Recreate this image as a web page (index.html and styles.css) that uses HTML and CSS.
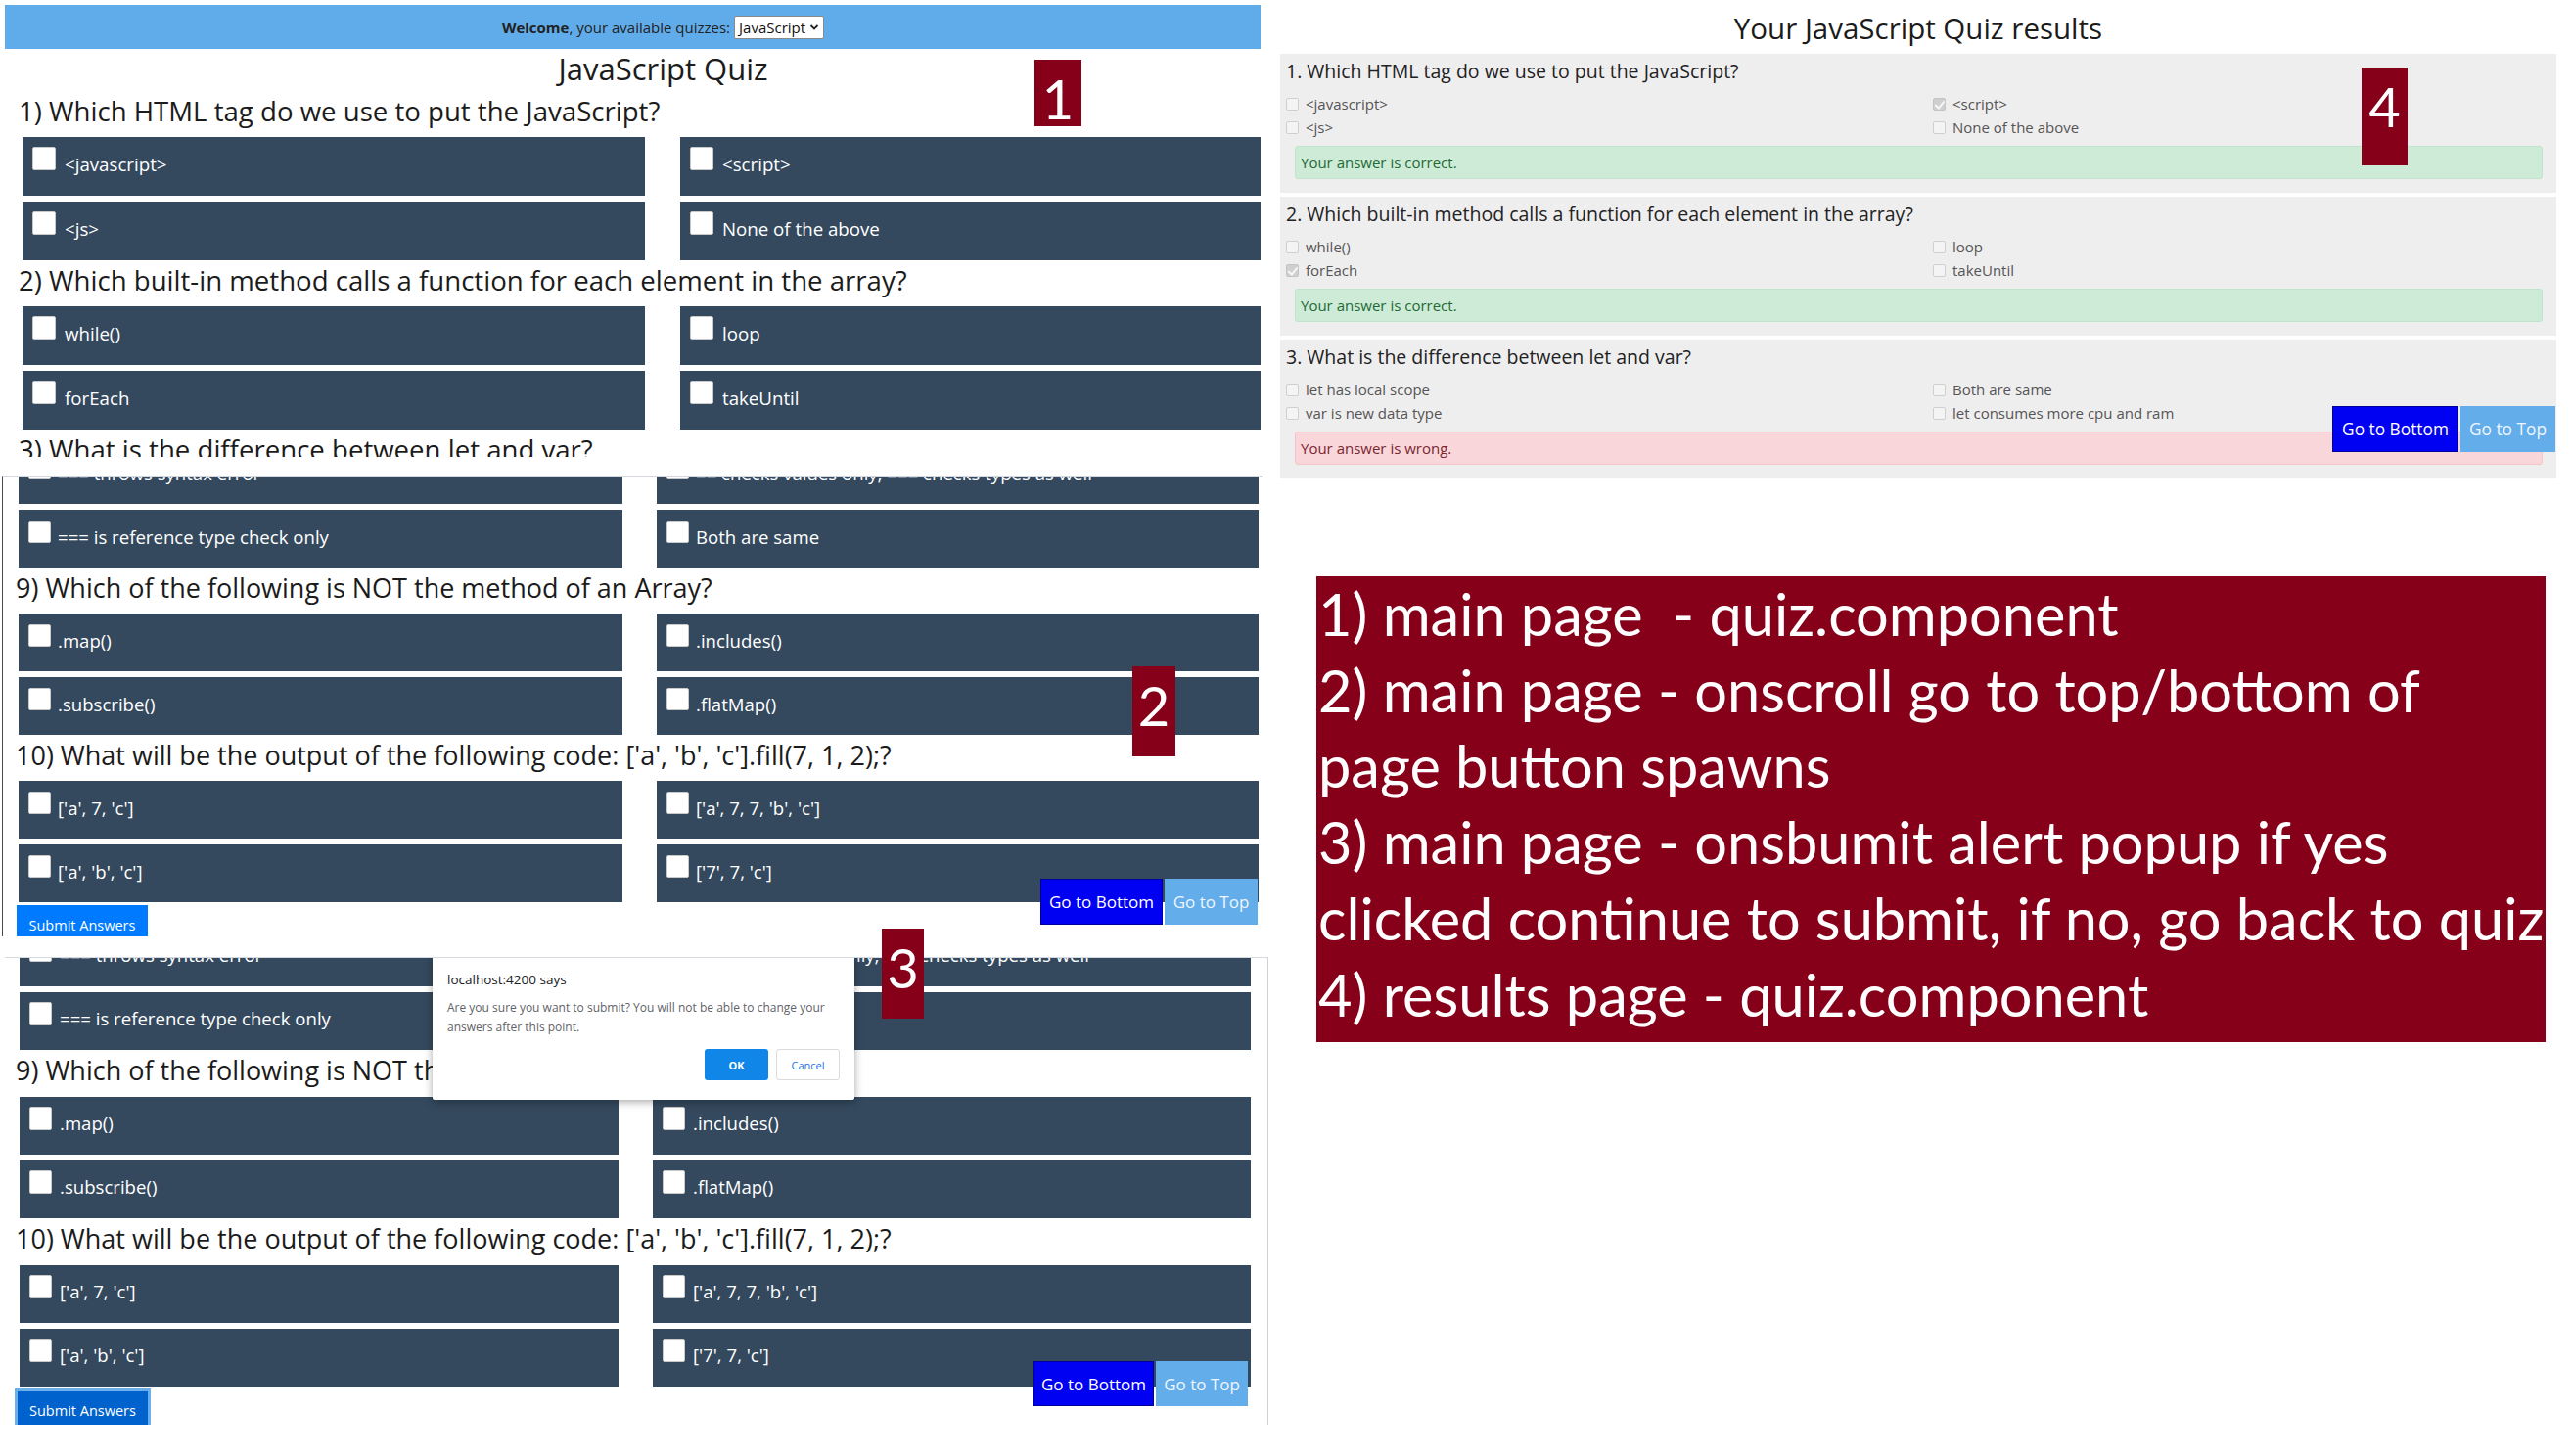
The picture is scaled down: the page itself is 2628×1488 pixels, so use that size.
FILE: index.html
```html
<!DOCTYPE html>
<html lang="en">
<head>
<meta charset="utf-8">
<title>JavaScript Quiz – overview</title>
<link rel="stylesheet" href="styles.css">
</head>
<body>
<div class="canvas">
  <div class="col-left">

    <section class="shot shot1">
      <div class="topbar">
        <span class="welcome"><b>Welcome</b>, your available quizzes:</span>
        <span class="select">JavaScript<svg width="10" height="8" viewBox="0 0 10 8"><path d="M1.5 2 L5 5.5 L8.5 2" fill="none" stroke="#222" stroke-width="1.8"/></svg></span>
      </div>
      <h1 class="quiz-title">JavaScript Quiz</h1>
      <h2 class="q">1) Which HTML tag do we use to put the JavaScript?</h2>
      <div class="opts">
        <div class="opt"><span class="cb"></span><span class="lbl">&lt;javascript&gt;</span></div>
        <div class="opt"><span class="cb"></span><span class="lbl">&lt;script&gt;</span></div>
        <div class="opt"><span class="cb"></span><span class="lbl">&lt;js&gt;</span></div>
        <div class="opt"><span class="cb"></span><span class="lbl">None of the above</span></div>
      </div>
      <h2 class="q">2) Which built-in method calls a function for each element in the array?</h2>
      <div class="opts">
        <div class="opt"><span class="cb"></span><span class="lbl">while()</span></div>
        <div class="opt"><span class="cb"></span><span class="lbl">loop</span></div>
        <div class="opt"><span class="cb"></span><span class="lbl">forEach</span></div>
        <div class="opt"><span class="cb"></span><span class="lbl">takeUntil</span></div>
      </div>
      <h2 class="q">3) What is the difference between let and var?</h2>
    </section>

    <section class="shot shot2">
      <div class="opts first">
        <div class="opt"><span class="cb"></span><span class="lbl">=== throws syntax error</span></div>
        <div class="opt"><span class="cb"></span><span class="lbl">== checks values only; === checks types as well</span></div>
        <div class="opt"><span class="cb"></span><span class="lbl">=== is reference type check only</span></div>
        <div class="opt"><span class="cb"></span><span class="lbl">Both are same</span></div>
      </div>
      <h2 class="q">9) Which of the following is NOT the method of an Array?</h2>
      <div class="opts">
        <div class="opt"><span class="cb"></span><span class="lbl">.map()</span></div>
        <div class="opt"><span class="cb"></span><span class="lbl">.includes()</span></div>
        <div class="opt"><span class="cb"></span><span class="lbl">.subscribe()</span></div>
        <div class="opt"><span class="cb"></span><span class="lbl">.flatMap()</span></div>
      </div>
      <h2 class="q">10) What will be the output of the following code: ['a', 'b', 'c'].fill(7, 1, 2);?</h2>
      <div class="opts">
        <div class="opt"><span class="cb"></span><span class="lbl">['a', 7, 'c']</span></div>
        <div class="opt"><span class="cb"></span><span class="lbl">['a', 7, 7, 'b', 'c']</span></div>
        <div class="opt"><span class="cb"></span><span class="lbl">['a', 'b', 'c']</span></div>
        <div class="opt"><span class="cb"></span><span class="lbl">['7', 7, 'c']</span></div>
      </div>
      <button class="submit">Submit Answers</button>
      <div class="goto goto2"><button class="go-bottom">Go to Bottom</button><button class="go-top">Go to Top</button></div>
    </section>

    <section class="shot shot3">
      <div class="opts first">
        <div class="opt"><span class="cb"></span><span class="lbl">=== throws syntax error</span></div>
        <div class="opt"><span class="cb"></span><span class="lbl">== checks values only; === checks types as well</span></div>
        <div class="opt"><span class="cb"></span><span class="lbl">=== is reference type check only</span></div>
        <div class="opt"><span class="cb"></span><span class="lbl">Both are same</span></div>
      </div>
      <h2 class="q">9) Which of the following is NOT the method of an Array?</h2>
      <div class="opts">
        <div class="opt"><span class="cb"></span><span class="lbl">.map()</span></div>
        <div class="opt"><span class="cb"></span><span class="lbl">.includes()</span></div>
        <div class="opt"><span class="cb"></span><span class="lbl">.subscribe()</span></div>
        <div class="opt"><span class="cb"></span><span class="lbl">.flatMap()</span></div>
      </div>
      <h2 class="q">10) What will be the output of the following code: ['a', 'b', 'c'].fill(7, 1, 2);?</h2>
      <div class="opts">
        <div class="opt"><span class="cb"></span><span class="lbl">['a', 7, 'c']</span></div>
        <div class="opt"><span class="cb"></span><span class="lbl">['a', 7, 7, 'b', 'c']</span></div>
        <div class="opt"><span class="cb"></span><span class="lbl">['a', 'b', 'c']</span></div>
        <div class="opt"><span class="cb"></span><span class="lbl">['7', 7, 'c']</span></div>
      </div>
      <button class="submit focused">Submit Answers</button>
      <div class="goto goto3"><button class="go-bottom">Go to Bottom</button><button class="go-top">Go to Top</button></div>
      <div class="dialog">
        <div class="dlg-title">localhost:4200 says</div>
        <div class="dlg-msg">Are you sure you want to submit? You will not be able to change your answers after this point.</div>
        <div class="dlg-btns"><button class="dlg-ok">OK</button><button class="dlg-cancel">Cancel</button></div>
      </div>
    </section>
  </div>

  <div class="col-right">
    <section class="results">
      <h1 class="res-title">Your JavaScript Quiz results</h1>
      <div class="card">
        <h3 class="res-q">1. Which HTML tag do we use to put the JavaScript?</h3>
        <div class="res-opts">
          <div class="ro"><span class="rcb"></span>&lt;javascript&gt;</div>
          <div class="ro"><span class="rcb checked"></span>&lt;script&gt;</div>
          <div class="ro"><span class="rcb"></span>&lt;js&gt;</div>
          <div class="ro"><span class="rcb"></span>None of the above</div>
        </div>
        <div class="alert ok">Your answer is correct.</div>
      </div>
      <div class="card">
        <h3 class="res-q">2. Which built-in method calls a function for each element in the array?</h3>
        <div class="res-opts">
          <div class="ro"><span class="rcb"></span>while()</div>
          <div class="ro"><span class="rcb"></span>loop</div>
          <div class="ro"><span class="rcb checked"></span>forEach</div>
          <div class="ro"><span class="rcb"></span>takeUntil</div>
        </div>
        <div class="alert ok">Your answer is correct.</div>
      </div>
      <div class="card">
        <h3 class="res-q">3. What is the difference between let and var?</h3>
        <div class="res-opts">
          <div class="ro"><span class="rcb"></span>let has local scope</div>
          <div class="ro"><span class="rcb"></span>Both are same</div>
          <div class="ro"><span class="rcb"></span>var is new data type</div>
          <div class="ro"><span class="rcb"></span>let consumes more cpu and ram</div>
        </div>
        <div class="alert bad">Your answer is wrong.</div>
      </div>
      <div class="goto goto4"><button class="go-bottom">Go to Bottom</button><button class="go-top">Go to Top</button></div>
    </section>

    <div class="note">
      <div class="nl">1) main page  - quiz.component</div>
      <div class="nl">2) main page - onscroll go to top/bottom of</div>
      <div class="nl">page button spawns</div>
      <div class="nl">3) main page - onsbumit alert popup if yes</div>
      <div class="nl">clicked continue to submit, if no, go back to quiz</div>
      <div class="nl">4) results page - quiz.component</div>
    </div>
  </div>

  <div class="badge b1">1</div>
  <div class="badge b2">2</div>
  <div class="badge b3">3</div>
  <div class="badge b4">4</div>
</div>
</body>
</html>
```

FILE: styles.css
```css
* { box-sizing: border-box; }
html, body { margin: 0; padding: 0; background: #ffffff; }
body { font-family: "Open Sans", "Noto Sans", sans-serif; color: #212529; }

.canvas {
  position: relative;
  width: 2628px;
  height: 1488px;
  display: grid;
  grid-template-columns: 1300px 1328px;
  overflow: hidden;
}
.col-left, .col-right { display: flex; flex-direction: column; align-items: flex-start; }

/* ---------- quiz screenshots ---------- */
.shot { position: relative; overflow: hidden; background: #fff; }
.shot1 { margin: 5px 0 0 5px; width: 1283px; height: 462px; }
.shot2 { margin: 19px 0 0 2px; width: 1288px; height: 471px; border-left: 1px solid #4a4a4a; border-top: 1px solid #d5d9df; }
.shot3 { margin: 21px 0 0 5px; width: 1291px; height: 478px; border-top: 1px solid #d5d9df; border-right: 1px solid #cfd3d8; }

.topbar {
  height: 45px;
  background: #60acea;
  display: flex;
  align-items: center;
  justify-content: center;
  padding-left: 62px;
  gap: 4px;
  font-size: 15px;
  color: #222;
}
.welcome b { font-weight: 700; }
.select {
  display: inline-flex;
  align-items: center;
  gap: 4px;
  height: 24px;
  padding: 0 4px 0 4px;
  background: #fff;
  border: 1px solid #8a8a8a;
  border-radius: 2px;
  font-size: 15px;
  color: #111;
}

.quiz-title {
  margin: 0 0 3px;
  padding-left: 62px;
  text-align: center;
  font-size: 31px;
  font-weight: 400;
  line-height: 40px;
  color: #1b1b1b;
}

.q {
  margin: 0 0 6px;
  padding-left: 14px;
  font-size: 27.6px;
  font-weight: 400;
  line-height: 41px;
  color: #1b1b1b;
  white-space: nowrap;
}

.opts { display: grid; row-gap: 6px; }
.opt {
  background: #34495e;
  display: flex;
  align-items: flex-start;
  color: #fff;
  white-space: nowrap;
}
.cb {
  flex: none;
  background: #fff;
  border: 1px solid #c9c9c9;
  border-radius: 2px;
}

.shot1 .opts { margin-left: 18px; grid-template-columns: 636px 1fr; column-gap: 36px; }
.shot1 .opt { height: 60px; padding: 10px 0 0 10px; }
.shot1 .cb { width: 24px; height: 24px; margin-right: 9px; }
.shot1 .lbl { font-size: 18.7px; line-height: 35px; }

.shot2 .q { padding-left: 13px; font-size: 27px; }
.shot2 .opts { margin-left: 16px; grid-template-columns: 617px 615px; column-gap: 35px; }
.shot2 .opts.first { margin-top: -31px; }
.shot2 .opt { height: 59px; padding: 11px 0 0 10px; }
.shot2 .cb { width: 23px; height: 23px; margin-right: 7px; }
.shot2 .lbl { font-size: 18.6px; line-height: 33px; }

.shot3 .q { padding-left: 11px; font-size: 27px; margin-bottom: 7px; }
.shot3 .opts { margin-left: 15px; grid-template-columns: 612px 611px; column-gap: 35px; }
.shot3 .opts.first { margin-top: -30px; }
.shot3 .opt { height: 59px; padding: 10px 0 0 10px; }
.shot3 .cb { width: 23px; height: 24px; margin-right: 8px; }
.shot3 .lbl { font-size: 18.6px; line-height: 33px; }

.submit {
  display: block;
  border: none;
  border-radius: 0;
  background: #007bff;
  color: #fff;
  font-family: "Open Sans", sans-serif;
  font-size: 14.5px;
  padding: 0;
  cursor: pointer;
}
.shot2 .submit { margin: 3px 0 0 14px; width: 134px; height: 33px; line-height: 33px; padding-top: 4px; }
.shot3 .submit.focused {
  margin: 2px 0 0 10px;
  width: 139px;
  height: 39px;
  background: #0062cc;
  border: 3px solid #6aaeea;
  border-bottom: none;
  padding-top: 2px;
}

.goto { position: absolute; display: flex; gap: 2px; }
.goto button {
  height: 47px;
  border: none;
  border-radius: 0;
  color: #fff;
  font-family: "Open Sans", sans-serif;
  font-size: 17px;
  padding: 0;
  cursor: pointer;
}
.go-bottom { background: #0000f2; border: 1px solid #00009a !important; }
.go-top { background: #64adeb; color: #eef6fd !important; }
.goto2 { left: 1060px; top: 411px; }
.goto2 .go-bottom { width: 125px; }
.goto2 .go-top { width: 95px; }
.goto3 { left: 1051px; top: 412px; height: 46px; }
.goto3 .go-bottom { width: 123px; height: 46px; }
.goto3 .go-top { width: 94px; height: 46px; }

.dialog {
  position: absolute;
  left: 437px;
  top: -3px;
  width: 431px;
  height: 148px;
  background: #fff;
  border-radius: 2px;
  box-shadow: 0 2px 9px rgba(0,0,0,0.35);
  padding: 16px 15px 0 15px;
}
.dlg-title { font-size: 13.5px; color: #202124; line-height: 18px; }
.dlg-msg { margin-top: 10px; font-size: 12px; line-height: 20px; color: #5f6368; width: 390px; }
.dlg-btns { display: flex; justify-content: flex-end; gap: 8px; margin-top: 12px; }
.dlg-ok {
  width: 65px; height: 32px;
  background: #0f86e8; color: #fff; border: none; border-radius: 3px;
  font-family: "Open Sans", sans-serif; font-size: 11px; font-weight: 700;
}
.dlg-cancel {
  width: 65px; height: 32px;
  background: #fff; color: #1a73e8; border: 1px solid #dadce0; border-radius: 3px;
  font-family: "Open Sans", sans-serif; font-size: 11px;
}

/* ---------- results ---------- */
.results { position: relative; margin-left: 8px; width: 1304px; height: 486px; }
.res-title {
  margin: 0;
  height: 55px;
  padding-top: 3px;
  text-align: center;
  font-size: 29.5px;
  font-weight: 400;
  line-height: 51px;
  color: #1b1b1b;
}
.card {
  background: #efeeef;
  margin-bottom: 4px;
  padding: 6px 14px 14px 6px;
}
.res-q { margin: 0 0 9px; font-size: 19.5px; font-weight: 400; line-height: 24px; color: #222; white-space: nowrap; }
.res-opts { display: grid; grid-template-columns: 661px 1fr; }
.ro { display: flex; align-items: center; height: 24px; font-size: 15px; color: #555; white-space: nowrap; }
.rcb {
  position: relative;
  width: 13px; height: 13px;
  margin-right: 7px;
  background: #f4f4f4;
  border: 1px solid #cfcfcf;
  border-radius: 2px;
  flex: none;
}
.rcb.checked { background: #cfcfcf; border-color: #c4c4c4; }
.rcb.checked::after {
  content: "";
  position: absolute;
  left: 3px; top: 0px;
  width: 4px; height: 8px;
  border: solid #f6f6f6;
  border-width: 0 2px 2px 0;
  transform: rotate(40deg);
}
.alert {
  margin: 7px 0 0 9px;
  height: 34px;
  padding-left: 5px;
  display: flex;
  align-items: center;
  font-size: 15px;
  border-radius: 3px;
  border: 1px solid transparent;
}
.alert.ok { background: #cdebd7; border-color: #c0e4cc; color: #1f6a35; }
.alert.bad { background: #f9d6da; border-color: #f3c5cb; color: #7a2630; }
.goto4 { right: 1px; top: 415px; }
.goto4 .go-bottom { width: 129px; font-size: 17.3px; }
.goto4 .go-top { width: 97px; font-size: 17.3px; }

/* ---------- note ---------- */
.note {
  margin: 103px 0 0 45px;
  width: 1256px;
  height: 476px;
  background: #870019;
  color: #fff;
  font-family: Lato, "Open Sans", sans-serif;
  font-size: 59.5px;
  line-height: 77.7px;
  padding-left: 2px;
}
.nl { white-space: pre; }

/* ---------- badges ---------- */
.badge {
  position: absolute;
  background: #870019;
  color: #fff;
  font-family: Lato, sans-serif;
  font-size: 56px;
  line-height: 56px;
  padding-top: 12px;
  text-align: center;
}
.b1 { left: 1057px; top: 61px; width: 48px; height: 68px; }
.b2 { left: 1157px; top: 681px; width: 44px; height: 92px; }
.b3 { left: 901px; top: 949px; width: 43px; height: 92px; }
.b4 { left: 2413px; top: 69px; width: 47px; height: 100px; }
```
